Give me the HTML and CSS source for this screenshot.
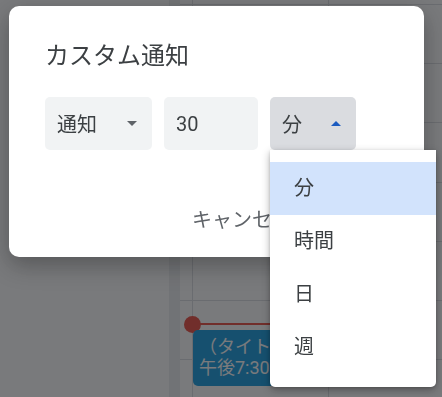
FILE: index.html
```html
<!DOCTYPE html>
<html lang="ja">
<head>
    <meta charset="UTF-8">
    <meta name="viewport" content="width=device-width, initial-scale=1.0">
    <title>カスタム通知</title>
    <link rel="stylesheet" href="styles.css">
</head>
<body>
    <!-- calendar behind the dialog -->
    <div class="calendar">
        <div class="sidebar"></div>
        <div class="gutter"></div>
        <div class="grid">
            <div class="grid-pad"></div>
            <div class="day">
                <div class="now-line"><span class="now-dot"></span></div>
                <div class="event">
                    <div>（タイトルなし）</div>
                    <div>午後7:30～8:30</div>
                </div>
            </div>
            <div class="day"></div>
        </div>
    </div>

    <div class="scrim"></div>

    <div class="dialog">
        <h1 class="dialog-title">カスタム通知</h1>
        <div class="fields">
            <div class="field field-type">
                <span>通知</span>
                <span class="arrow"></span>
            </div>
            <div class="field field-value">
                <span>30</span>
            </div>
            <div class="field field-unit open">
                <span>分</span>
                <span class="arrow arrow-up"></span>
                <ul class="menu">
                    <li class="selected">分</li>
                    <li>時間</li>
                    <li>日</li>
                    <li>週</li>
                </ul>
            </div>
        </div>
        <div class="actions">
            <button class="btn">キャンセル</button>
            <button class="btn btn-primary">保存</button>
        </div>
    </div>
</body>
</html>
```

FILE: styles.css
```css
body {
    margin: 0;
    font-family: Roboto, "Noto Sans CJK JP", sans-serif;
    color: #3c4043;
    overflow: hidden;
}
.calendar {
    display: flex;
    height: 397px;
    background: #fff;
}
.sidebar {
    flex: 0 0 169px;
}
.gutter {
    flex: 0 0 11px;
    background: #eceef0;
}
.grid {
    flex: 1;
    min-width: 0;
    display: flex;
    overflow: hidden;
    background: repeating-linear-gradient(to bottom, #dadce0 0 1px, transparent 1px 59.2px);
    background-position: 0 4px;
}
.grid-pad {
    flex: 0 0 12px;
}
.day {
    position: relative;
    flex: 0 0 135px;
    border-left: 1px solid #dadce0;
}
.now-line {
    position: absolute;
    top: 323px;
    left: 0;
    right: 0;
    height: 2px;
    background: #ea4335;
}
.now-dot {
    position: absolute;
    left: -9px;
    top: -7px;
    width: 17px;
    height: 17px;
    border-radius: 50%;
    background: #ea4335;
}
.event {
    position: absolute;
    top: 330px;
    left: 0;
    width: 128px;
    height: 56px;
    box-sizing: border-box;
    padding: 6px 6px;
    border-radius: 5px;
    background: #0897df;
    color: #fff;
    font-size: 18px;
    line-height: 21px;
    white-space: nowrap;
    overflow: hidden;
}
.scrim {
    position: fixed;
    inset: 0;
    background: rgba(32, 33, 36, 0.6);
}
.dialog {
    position: fixed;
    left: 9px;
    top: 6px;
    width: 415px;
    height: 251px;
    box-sizing: border-box;
    padding: 34px 36px 0;
    background: #fff;
    border-radius: 10px;
    box-shadow: 0 8px 24px rgba(0, 0, 0, 0.3);
}
.dialog-title {
    margin: 0;
    font-size: 24px;
    font-weight: 400;
    line-height: 32px;
    color: #3c4043;
}
.fields {
    display: flex;
    gap: 12px;
    margin-top: 25px;
}
.field {
    position: relative;
    display: flex;
    align-items: center;
    justify-content: space-between;
    height: 53px;
    box-sizing: border-box;
    padding: 0 15px 0 12px;
    background: #f1f3f4;
    border-radius: 5px;
    font-size: 20px;
    color: #3c4043;
}
.field-type {
    width: 107px;
}
.field-value {
    width: 94px;
}
.field-unit {
    width: 86px;
    background: #dadce0;
}
.arrow {
    width: 0;
    height: 0;
    border-left: 5px solid transparent;
    border-right: 5px solid transparent;
    border-top: 5px solid #5f6368;
}
.arrow-up {
    border-top: none;
    border-bottom: 5px solid #1a5bc0;
}
.menu {
    position: absolute;
    top: 100%;
    left: 0;
    width: 166px;
    margin: 0;
    padding: 12px 0 13px;
    list-style: none;
    background: #fff;
    border-radius: 0 0 5px 5px;
    box-shadow: 0 3px 8px rgba(0, 0, 0, 0.3), 0 1px 3px rgba(0, 0, 0, 0.15);
    z-index: 2;
}
.menu li {
    height: 53px;
    line-height: 53px;
    padding-left: 24px;
    font-size: 20px;
    color: #3c4043;
}
.menu li.selected {
    background: #d2e3fc;
}
.actions {
    display: flex;
    justify-content: flex-end;
    gap: 8px;
    margin-top: 49px;
}
.btn {
    height: 38px;
    padding: 0 16px;
    border: none;
    background: none;
    font-family: inherit;
    font-size: 20px;
    color: #5f6368;
}
.btn-primary {
    color: #1a73e8;
}
```
